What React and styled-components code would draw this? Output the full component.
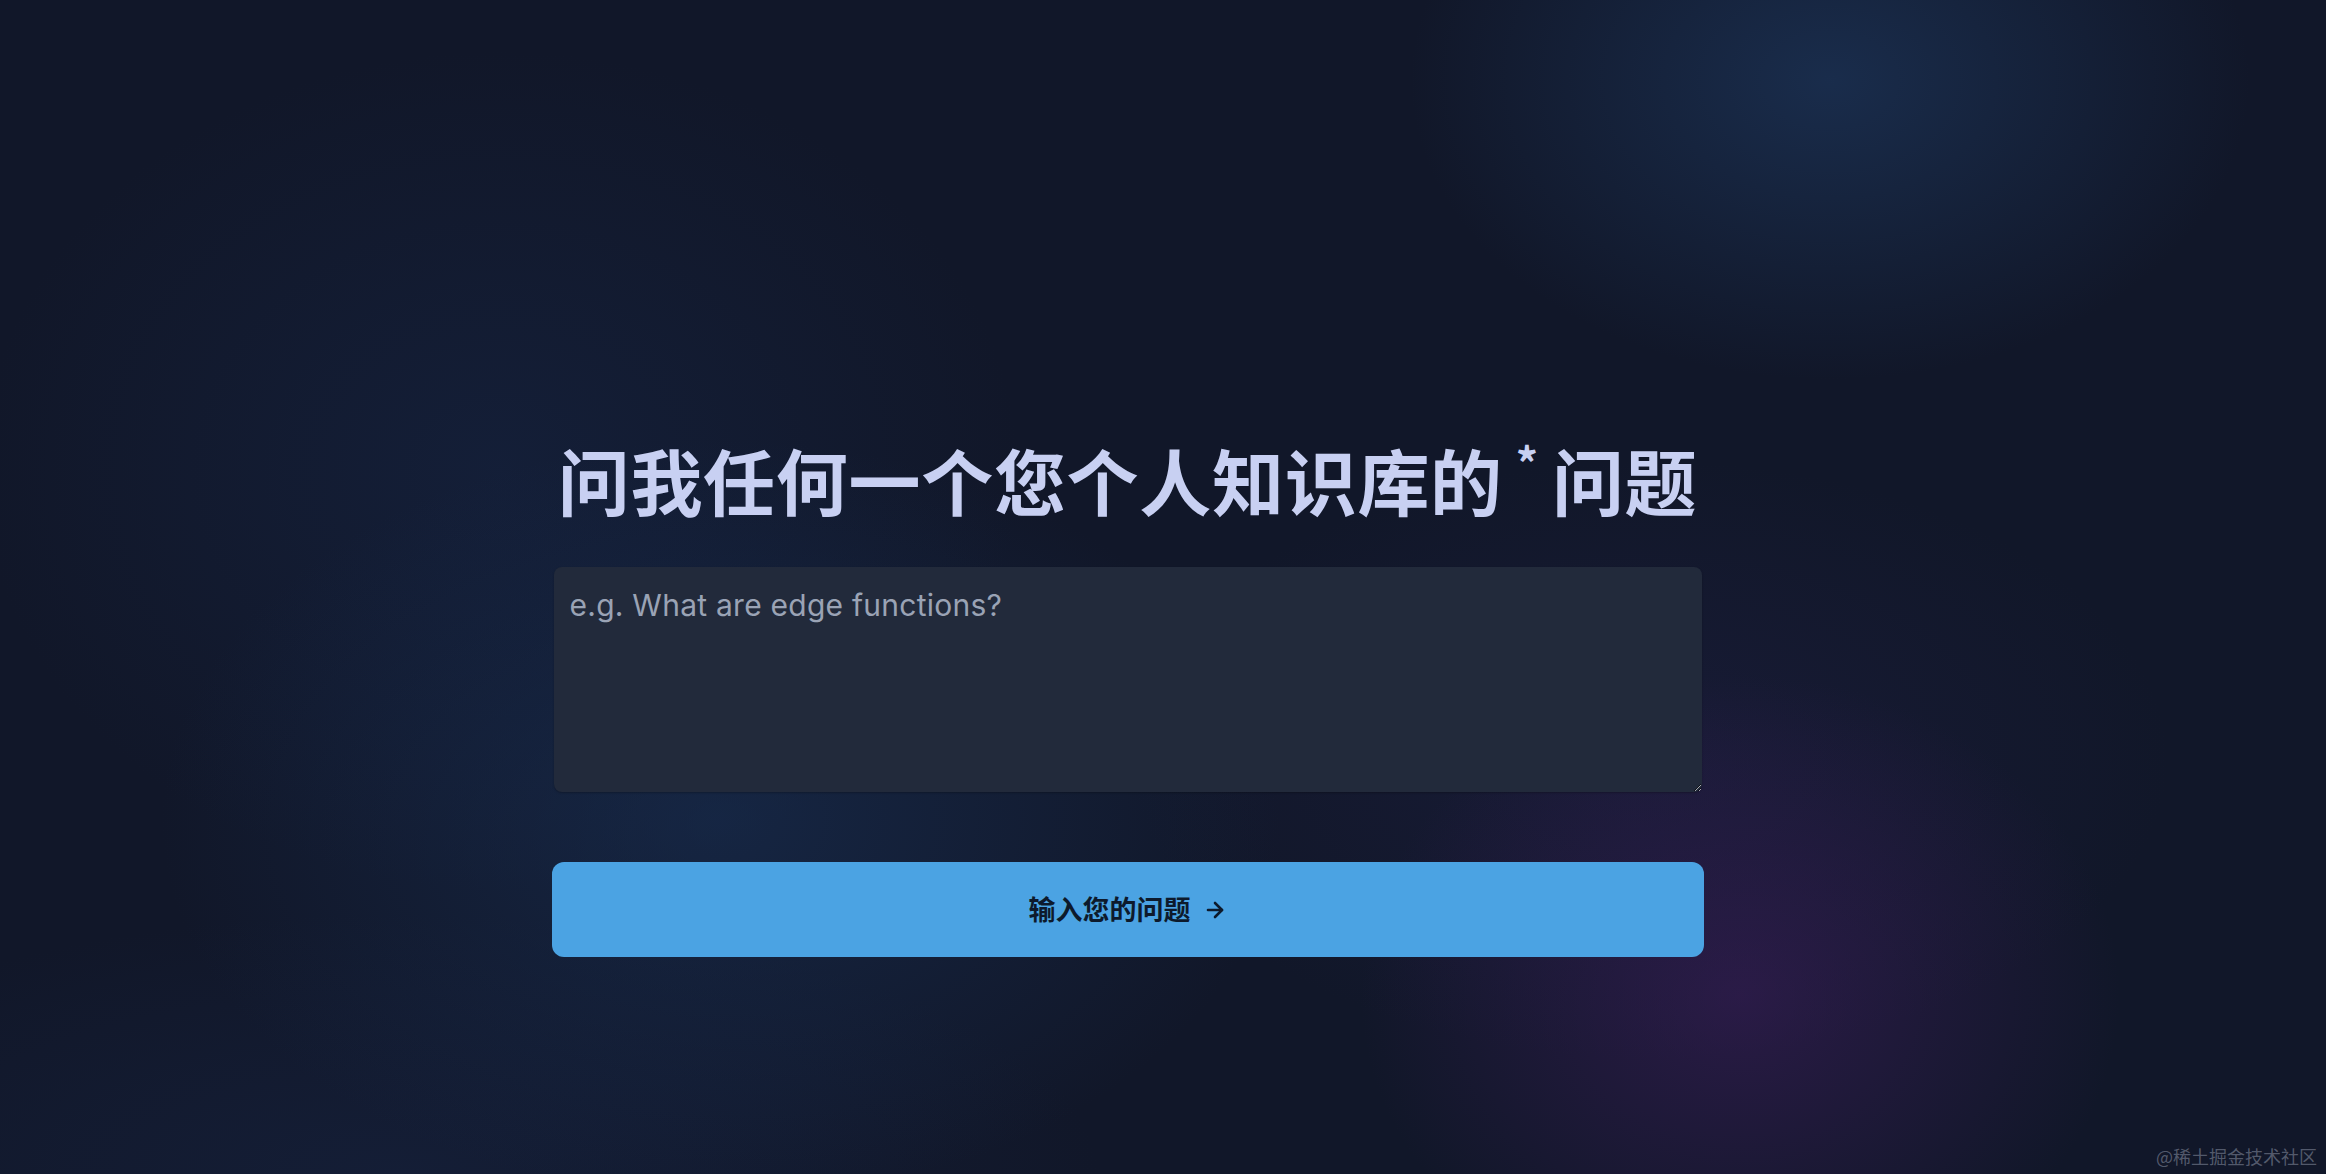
import React from "react";
import styled, { createGlobalStyle } from "styled-components";
import { ArrowRight } from "lucide-react";

const GlobalStyle = createGlobalStyle`
  html, body {
    margin: 0;
    padding: 0;
    background: #111729;
  }
  * {
    box-sizing: border-box;
  }
`;

function App() {
  return (
    <Page>
      <GlobalStyle />
      <Column>
        <Title>
          问我任何一个您个人知识库的 <Star>*</Star> 问题
        </Title>
        <Form onSubmit={(e) => e.preventDefault()}>
          <Question placeholder="e.g. What are edge functions?" />
          <Submit type="submit">
            输入您的问题
            <ArrowRight size={24} strokeWidth={2.6} />
          </Submit>
        </Form>
      </Column>
      <Watermark>@稀土掘金技术社区</Watermark>
    </Page>
  );
}

export default App;

const Page = styled.div`
  position: relative;
  min-height: 100vh;
  display: flex;
  justify-content: center;
  padding: 436px 71px 0 0;
  overflow: hidden;
  font-family: Inter, "Noto Sans", "Noto Sans CJK SC", sans-serif;
  background:
    radial-gradient(ellipse 420px 300px at 1830px 80px, rgba(32, 62, 104, 0.55), transparent 100%),
    radial-gradient(ellipse 560px 380px at 720px 820px, rgba(26, 52, 92, 0.5), transparent 100%),
    radial-gradient(ellipse 520px 420px at 500px 470px, rgba(24, 42, 78, 0.4), transparent 100%),
    radial-gradient(ellipse 380px 320px at 1740px 995px, rgba(66, 30, 98, 0.5), transparent 100%),
    radial-gradient(ellipse 520px 300px at 1650px 760px, rgba(40, 36, 84, 0.3), transparent 100%),
    radial-gradient(ellipse 700px 260px at 400px 1174px, rgba(24, 38, 70, 0.45), transparent 100%),
    #111729;
`;

const Column = styled.main`
  width: 1152px;
  display: flex;
  flex-direction: column;
  align-items: center;
`;

const Title = styled.h1`
  margin: 0;
  font-family: "Noto Sans CJK SC", "Noto Sans", sans-serif;
  font-size: 72px;
  letter-spacing: 0.7px;
  line-height: 86px;
  font-weight: 700;
  color: #c8d0f2;
  white-space: nowrap;
`;

const Star = styled.span`
  display: inline-block;
  font-size: 44px;
  vertical-align: top;
  line-height: 50px;
  margin: 0 -4px;
`;

const Form = styled.form`
  width: 100%;
  display: flex;
  flex-direction: column;
  gap: 70px;
  margin-top: 45px;
`;

const Question = styled.textarea`
  display: block;
  width: 1148px;
  height: 225px;
  margin: 0 2px;
  padding: 17px 16px;
  border: none;
  border-radius: 8px;
  background: #222a3b;
  color: #e5e7eb;
  color-scheme: dark;
  font-family: Inter, "Noto Sans", sans-serif;
  font-size: 30px;
  letter-spacing: 0.25px;
  line-height: 42px;
  outline: none;
  box-shadow: 0 1px 2px rgba(0, 0, 0, 0.25);

  &::placeholder {
    color: #9aa3b5;
  }
`;

const Submit = styled.button`
  width: 100%;
  height: 95px;
  display: flex;
  align-items: center;
  justify-content: center;
  gap: 12px;
  border: none;
  border-radius: 12px;
  background: #4ba3e3;
  color: #0d1a2c;
  font-family: "Noto Sans CJK SC", "Noto Sans", sans-serif;
  font-size: 27px;
  font-weight: 700;
  padding: 0 0 3px 0;
  cursor: pointer;

  svg {
    margin-top: 3px;
  }
`;

const Watermark = styled.div`
  position: absolute;
  right: 9px;
  bottom: 5px;
  font-family: "Noto Sans CJK SC", sans-serif;
  font-size: 18px;
  color: rgba(140, 148, 166, 0.55);
`;
